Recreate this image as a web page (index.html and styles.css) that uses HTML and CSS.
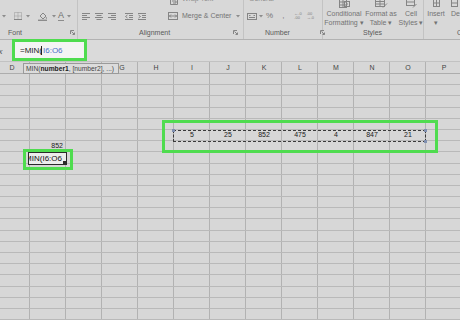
FILE: index.html
```html
<!DOCTYPE html>
<html>
<head>
<meta charset="utf-8">
<link rel="stylesheet" href="styles.css">
</head>
<body>
<div class="ribbon">
  <div class="group g-font">
    <div class="gbody">
      <div class="rtop"></div>
      <div class="rmid">
        <svg class="dd m2" width="4" height="3" viewBox="0 0 4 3"><path d="M0 0h4L2 2.5z"/></svg>
        <svg class="ic m8" width="8" height="8" viewBox="0 0 8 8"><rect x=".5" y=".5" width="7" height="7" class="st dot"/><path d="M4 .5v7M.5 4h7" class="st dot"/><path d="M0 7.5h8" class="st"/></svg>
        <svg class="dd m4" width="4" height="3" viewBox="0 0 4 3"><path d="M0 0h4L2 2.5z"/></svg>
        <svg class="ic m8" width="9" height="9" viewBox="0 0 9 9"><path d="M2 4l3-3 3 3-3 3z" class="st"/><path d="M8 5c.6 1 .6 1.6 0 1.8" class="st"/><rect x="0" y="7.6" width="9" height="1.4" class="fl"/></svg>
        <svg class="dd m5" width="4" height="3" viewBox="0 0 4 3"><path d="M0 0h4L2 2.5z"/></svg>
        <span class="fa m2">A</span>
        <svg class="dd m3" width="4" height="3" viewBox="0 0 4 3"><path d="M0 0h4L2 2.5z"/></svg>
      </div>
    </div>
    <div class="glabel"><span class="lt l-font">Font</span><svg class="launch l-fontl" width="5" height="5" viewBox="0 0 5 5"><path d="M.5 4V.5H4M1.5 1.5l3 3M4.5 2.5v2h-2" class="st"/></svg></div>
  </div>

  <div class="group g-align">
    <div class="gbody">
      <div class="rtop">
        <svg class="ic m92" width="8" height="5" viewBox="0 0 8 5"><path d="M.5 0v4.5h7V0M2 1h4v2H3" class="st"/></svg>
        <span class="rt m4 cut">Wrap Text</span>
      </div>
      <div class="rmid">
        <svg class="ic m4" width="8" height="7" viewBox="0 0 8 7"><path d="M0 .5h8M0 2.5h5M0 4.5h8M0 6.5h5" class="st"/></svg>
        <svg class="ic m5" width="8" height="7" viewBox="0 0 8 7"><path d="M0 .5h8M1.5 2.5h5M0 4.5h8M1.5 6.5h5" class="st"/></svg>
        <svg class="ic m5" width="8" height="7" viewBox="0 0 8 7"><path d="M0 .5h8M3 2.5h5M0 4.5h8M3 6.5h5" class="st"/></svg>
        <svg class="ic m9" width="8" height="7" viewBox="0 0 8 7"><path d="M0 .5h8M4 2.5h4M4 4.5h4M0 6.5h8M2.5 2L.5 3.5l2 1.5" class="st"/></svg>
        <svg class="ic m5" width="8" height="7" viewBox="0 0 8 7"><path d="M0 .5h8M4 2.5h4M4 4.5h4M0 6.5h8M.5 2l2 1.5-2 1.5" class="st"/></svg>
        <svg class="ic m22" width="10" height="8" viewBox="0 0 10 8"><rect x=".5" y=".5" width="9" height="7" class="st"/><path d="M.5 4h9M3 2.5L1.5 4 3 5.5M7 2.5L8.5 4 7 5.5" class="st"/></svg>
        <span class="rt m4">Merge &amp; Center</span>
        <svg class="dd m5" width="4" height="3" viewBox="0 0 4 3"><path d="M0 0h4L2 2.5z"/></svg>
      </div>
    </div>
    <div class="glabel"><span class="lt l-align">Alignment</span><svg class="launch l-alignl" width="5" height="5" viewBox="0 0 5 5"><path d="M.5 4V.5H4M1.5 1.5l3 3M4.5 2.5v2h-2" class="st"/></svg></div>
  </div>

  <div class="group g-num">
    <div class="gbody">
      <div class="rtop"><span class="rt m5 cut">General</span></div>
      <div class="rmid">
        <svg class="ic m3" width="10" height="8" viewBox="0 0 10 8"><rect x=".5" y="1.5" width="9" height="6" class="st"/><path d="M2 3.5h1.5M6.5 3.5H8M2 5.5h6" class="st"/></svg>
        <svg class="dd m2" width="4" height="3" viewBox="0 0 4 3"><path d="M0 0h4L2 2.5z"/></svg>
        <span class="rt big m3">%</span>
        <span class="rt big m9">,</span>
        <span class="rt tiny m10">←.0<br>.00</span>
        <span class="rt tiny m5">.00<br>→.0</span>
      </div>
    </div>
    <div class="glabel"><span class="lt l-num">Number</span><svg class="launch l-numl" width="5" height="5" viewBox="0 0 5 5"><path d="M.5 4V.5H4M1.5 1.5l3 3M4.5 2.5v2h-2" class="st"/></svg></div>
  </div>

  <div class="group g-styles">
    <div class="gbody big-row">
      <div class="bigbtn w-cf">
        <svg class="bic" width="11" height="8" viewBox="0 0 11 8"><rect x=".5" y="-2" width="7" height="9.5" class="st"/><path d="M.5 2h7M.5 5h7M4 -2v9.5" class="st"/><rect x="5.5" y="1.5" width="5" height="5" class="st"/><path d="M7 4h2" class="st"/></svg>
        <span class="bl">Conditional</span>
        <span class="bl">Formatting ▾</span>
      </div>
      <div class="bigbtn w-ft">
        <svg class="bic" width="13" height="8" viewBox="0 0 13 8"><rect x=".5" y="-2" width="9" height="8.5" class="st"/><path d="M.5 1.5h9M.5 4h9M5 -2v8.5" class="st"/><path d="M8 7.5l4-4" class="st"/></svg>
        <span class="bl">Format as</span>
        <span class="bl">Table ▾</span>
      </div>
      <div class="bigbtn w-cs">
        <svg class="bic" width="11" height="8" viewBox="0 0 11 8"><rect x=".5" y="-2" width="8" height="7.5" class="st"/><path d="M.5 2h8" class="st"/><path d="M7 7.5l3.5-3.5" class="st"/></svg>
        <span class="bl">Cell</span>
        <span class="bl">Styles ▾</span>
      </div>
    </div>
    <div class="glabel"><span class="lt l-sty">Styles</span></div>
  </div>

  <div class="group g-cells">
    <div class="gbody big-row">
      <div class="bigbtn w-ins">
        <svg class="bic" width="7" height="6" viewBox="0 0 7 6"><rect x=".5" y="-2" width="6" height="7.5" class="st"/><path d="M.5 2h6M3.5 -2v7.5" class="st"/></svg>
        <span class="bl">Insert</span>
        <span class="bl">▾</span>
      </div>
      <div class="bigbtn w-del">
        <svg class="bic" width="7" height="6" viewBox="0 0 7 6"><rect x=".5" y="-2" width="6" height="7.5" class="st"/><path d="M.5 2h6" class="st"/></svg>
        <span class="bl">De</span>
      </div>
    </div>
    <div class="glabel"><span class="lt l-cells">Ce</span></div>
  </div>
</div>

<div class="fbar">
  <span class="fx">fx</span>
  <div class="finput"><span class="fn">=MIN(</span><span class="caret"></span><span class="ref">I6:O6</span></div>
</div>

<div class="sheet">
  <div class="colheads">
    <span>D</span><span></span><span></span><span class="g-half">G</span><span>H</span><span>I</span><span>J</span><span>K</span><span>L</span><span>M</span><span>N</span><span>O</span><span>P</span>
  </div>
  <div class="row"></div>
  <div class="row"></div>
  <div class="row"></div>
  <div class="row"></div>
  <div class="row"></div>
  <div class="row vals">
    <span></span><span></span><span></span><span></span><span></span>
    <span>5</span><span>25</span><span>852</span><span>475</span><span>4</span><span>847</span><span>21</span><span></span>
  </div>
  <div class="row"><span></span><span class="num">852</span></div>
  <div class="row"></div>
  <div class="row"></div>
  <div class="row"></div>
  <div class="row"></div>
  <div class="row"></div>
  <div class="row"></div>
  <div class="row"></div>
  <div class="row"></div>
  <div class="row"></div>
  <div class="row"></div>
  <div class="row"></div>
  <div class="row"></div>
  <div class="row"></div>
  <div class="row"></div>
  <div class="row"></div>
</div>

<div class="tooltip">MIN(<b>number1</b>, [number2], ...)</div>
<div class="marquee"><i class="h h-tl"></i><i class="h h-tr"></i><i class="h h-br"></i></div>
<div class="editcell"><span>=MIN(I6:O6</span><i class="fillh"></i></div>
<div class="hl hl-row"></div>
<div class="hl hl-cell"></div>
</body>
</html>
```

FILE: styles.css
```css
* { box-sizing: border-box; margin: 0; padding: 0; }

body {
  width: 460px;
  height: 320px;
  overflow: hidden;
  position: relative;
  background: #d7d7d7;
  font-family: "Liberation Sans", Arial, sans-serif;
  color: #333;
}

/* ---------- ribbon ---------- */
.ribbon {
  display: flex;
  height: 40px;
  background: #d8d8d8;
  border-bottom: 1px solid #b2b2b2;
  overflow: hidden;
}
.group {
  display: flex;
  flex-direction: column;
  flex: none;
  border-right: 1px solid #c3c3c3;
}
.g-font { width: 78px; }
.g-align { width: 166px; }
.g-num { width: 79px; }
.g-styles { width: 101px; }
.g-cells { width: 37px; border-right: none; }

.gbody { height: 27px; display: flex; flex-direction: column; }
.rtop { height: 10px; display: flex; align-items: flex-start; overflow: hidden; }
.rmid { height: 12px; display: flex; align-items: center; }

.st { fill: none; stroke: #858585; stroke-width: 1; }
.dot { stroke-dasharray: 1 1; stroke: #9a9a9a; }
.fl { fill: #8c8c8c; }
.dd { flex: none; fill: #8c8c8c; }
.ic { flex: none; display: block; }

.rt { font-size: 7px; color: #737373; white-space: nowrap; line-height: 8px; }
.rt.cut { margin-top: -5px; color: #8f8f8f; }
.rt.big { font-size: 8px; color: #777; }
.rt.tiny { font-size: 4px; line-height: 4px; color: #7d7d7d; }
.fa { font-size: 9px; color: #6e6e6e; line-height: 9px; border-bottom: 1.5px solid #8c8c8c; }

.m2 { margin-left: 2px; }
.m3 { margin-left: 3px; }
.m4 { margin-left: 4px; }
.m5 { margin-left: 5px; }
.m8 { margin-left: 8px; }
.m9 { margin-left: 9px; }
.m10 { margin-left: 10px; }
.m22 { margin-left: 22px; }
.m92 { margin-left: 92px; }

.glabel {
  height: 10px;
  display: flex;
  align-items: center;
}
.lt { font-size: 7px; color: #5a5a5a; white-space: nowrap; }
.l-font { margin-left: 8px; }
.l-align { margin-left: 61px; }
.l-num { margin-left: 21px; }
.l-sty { margin-left: 40px; }
.l-cells { margin-left: 33px; }
.launch { flex: none; }
.l-fontl { margin-left: 48px; }
.l-alignl { margin-left: 63px; }
.l-numl { margin-left: 30px; }

.big-row { flex-direction: row; }
.bigbtn {
  display: flex;
  flex-direction: column;
  align-items: center;
  flex: none;
}
.bic { display: block; height: 8px; margin-bottom: 1px; flex: none; }
.bl { font-size: 7px; line-height: 9px; color: #737373; white-space: nowrap; }
.w-cf { width: 40px; margin-left: 1px; }
.w-ft { width: 32px; margin-left: 1px; }
.w-cs { width: 26px; margin-left: 1px; }
.w-ins { width: 22px; margin-left: 1px; }
.w-del { width: 10px; margin-left: 4px; align-items: flex-start; }

/* ---------- formula bar ---------- */
.fbar {
  height: 22px;
  display: flex;
  align-items: center;
  background: #dadada;
  border-bottom: 1px solid #c2c2c2;
}
.fx {
  font-family: "Liberation Serif", serif;
  font-style: italic;
  font-size: 9px;
  color: #555;
  margin-left: -4px;
  width: 16px;
}
.finput {
  align-self: flex-start;
  margin-top: -1px;
  width: 75px;
  height: 22px;
  border: 3px solid #4fdc4f;
  background: #f4f4f4;
  display: flex;
  align-items: center;
  padding-left: 5px;
  font-size: 8px;
}
.fn { color: #222; }
.caret { width: 1px; height: 9px; background: #222; margin: 0 0 0 -1px; }
.ref { color: #4a6fc8; margin-left: 1px; }

/* ---------- sheet ---------- */
.sheet {
  margin-left: -6px;
  width: 468px;
  background-image: repeating-linear-gradient(to right, transparent 0 35px, #b2b2b2 35px 36px);
}
.colheads {
  display: grid;
  grid-template-columns: repeat(13, 36px);
  height: 12px;
  border-bottom: 1px solid #adadad;
  font-size: 7px;
  line-height: 11px;
  color: #444;
  text-align: center;
}
.g-half { padding-left: 4px; }
.row {
  display: grid;
  grid-template-columns: repeat(13, 36px);
  height: 11.2px;
  border-bottom: 1px solid #b9b9b9;
  font-size: 7px;
  line-height: 10px;
  color: #222;
}
.vals span { text-align: center; }
.num { text-align: right; padding-right: 3px; }

/* ---------- overlays ---------- */
.tooltip {
  position: absolute;
  left: 23px;
  top: 63px;
  width: 96px;
  height: 11px;
  background: #dcdcdc;
  border: 1px solid #9a9a9a;
  font-size: 6.7px;
  line-height: 9px;
  padding-left: 2px;
  color: #444;
  white-space: nowrap;
  overflow: hidden;
}
.tooltip b { color: #222; }

.marquee {
  position: absolute;
  left: 173px;
  top: 130px;
  width: 253px;
  height: 12px;
  border: 1px dashed #3a3a3a;
}
.h {
  position: absolute;
  width: 3px;
  height: 3px;
  background: #7f8fb0;
}
.h-tl { left: -2px; top: -2px; }
.h-tr { right: -2px; top: -2px; }
.h-br { right: -2px; bottom: -2px; }

.editcell {
  position: absolute;
  left: 28px;
  top: 152px;
  width: 39px;
  height: 13px;
  border: 1px solid #2a2a2a;
  background: #ececec;
  overflow: hidden;
  display: flex;
  justify-content: flex-end;
  align-items: center;
  padding-right: 4px;
  font-size: 8px;
  color: #111;
  white-space: nowrap;
}
.editcell span { flex: none; }
.fillh {
  position: absolute;
  right: 0;
  bottom: 0;
  width: 3px;
  height: 3px;
  background: #2a2a2a;
}

.hl {
  position: absolute;
  border: 3px solid #4fdc4f;
}
.hl-row { left: 162px; top: 120px; width: 276px; height: 33px; }
.hl-cell { left: 23px; top: 149px; width: 50px; height: 21px; }
```
